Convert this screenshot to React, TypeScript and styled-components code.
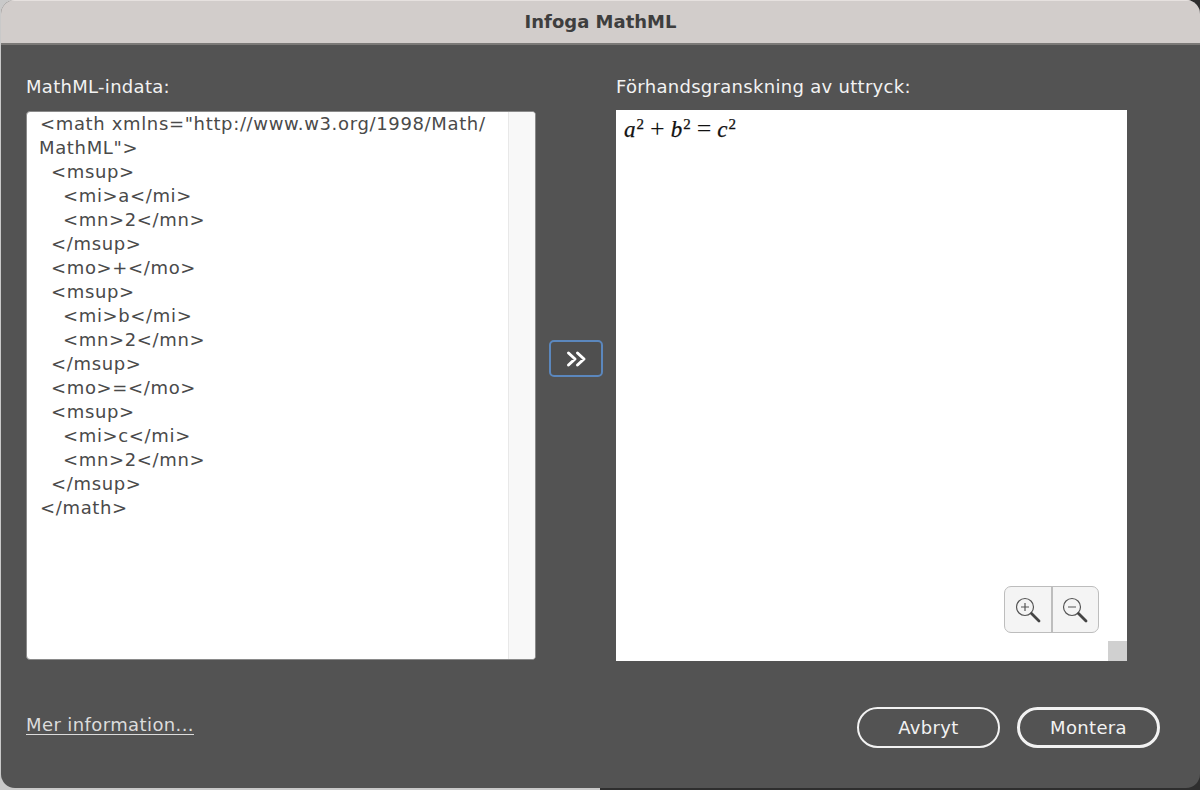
import React from 'react';
import styled, { createGlobalStyle } from 'styled-components';

const GlobalStyle = createGlobalStyle`
  html, body {
    margin: 0;
    padding: 0;
    width: 1200px;
    height: 790px;
    overflow: hidden;
    background: linear-gradient(90deg, #c9c9c9 0 50%, #2e2e2e 50% 100%);
  }
  * { box-sizing: border-box; }
`;

const FONT = `'DejaVu Sans', 'Liberation Sans', sans-serif`;

const Dialog = styled.div`
  width: 1199px;
  height: 788px;
  margin-left: 1px;
  display: flex;
  flex-direction: column;
  background: #535353;
  border-radius: 14px;
  overflow: hidden;
  font-family: ${FONT};
`;

const TitleBar = styled.header`
  height: 45px;
  flex: none;
  display: flex;
  align-items: center;
  justify-content: center;
  padding-bottom: 2px;
  background: #d2cdcb;
  border-top: 1px solid #e6e1df;
  border-bottom: 2px solid #7b7977;
  font-size: 18px;
  font-weight: 700;
  color: #3e3e3e;
`;

const Main = styled.main`
  flex: 1;
  display: grid;
  grid-template-columns: 510px 80px 511px;
  grid-template-rows: 22px 551px;
  row-gap: 12px;
  padding: 31px 0 0 25px;
`;

const Label = styled.label`
  font-size: 18px;
  line-height: 22px;
  letter-spacing: 0.3px;
  color: #f2f2f2;
  white-space: nowrap;
`;

const Spacer = styled.div``;

const Source = styled.div`
  height: 549px;
  margin-top: 1px;
  display: flex;
  background: #fff;
  border: 1px solid #8a8a8a;
  border-radius: 4px;
  overflow: hidden;
`;

const Code = styled.div`
  flex: 1;
  padding: 0 0 0 12px;
  font-size: 18px;
  line-height: 24px;
  letter-spacing: 0.65px;
  color: #4a4a4a;
`;

const CodeLine = styled.div<{ $indent: number; $nudge?: boolean }>`
  padding-left: ${(p) => p.$indent * 12 + (p.$nudge ? 1 : 0)}px;
  white-space: pre;
`;

const ScrollTrack = styled.div`
  width: 27px;
  background: #f8f8f8;
  border-left: 1px solid #e8e8e8;
`;

const Middle = styled.div`
  display: flex;
  justify-content: center;
  align-items: flex-start;
  padding-top: 230px;
`;

const ArrowButton = styled.button`
  width: 54px;
  height: 37px;
  padding: 0;
  display: flex;
  align-items: center;
  justify-content: center;
  background: #4f4f4f;
  border: 2px solid #5b87bd;
  border-radius: 5px;
`;

const Preview = styled.div`
  position: relative;
  background: #fff;
  padding: 7px 8px;
`;

const Formula = styled.div`
  display: flex;
  align-items: baseline;
  font-family: 'Liberation Serif', serif;
  font-size: 23px;
  line-height: 26px;
  color: #111;
  -webkit-text-stroke: 0.25px #111;
`;

const Variable = styled.i`
  font-weight: 500;
`;

const Exponent = styled.sup`
  display: inline-block;
  font-size: 15px;
  line-height: 0;
  margin-left: 1px;
  vertical-align: baseline;
  transform: translateY(-8px);
`;

const Operator = styled.span`
  margin: 0 6px;
  font-size: 26px;
  line-height: 0;
  -webkit-text-stroke: 0;
`;

const ZoomGroup = styled.div`
  position: absolute;
  left: 388px;
  top: 476px;
  width: 95px;
  height: 47px;
  display: flex;
  background: #f4f4f4;
  border: 1px solid #bdbdbd;
  border-radius: 7px;
  overflow: hidden;
`;

const ZoomButton = styled.button`
  flex: 1;
  padding: 0;
  display: flex;
  align-items: center;
  justify-content: center;
  background: transparent;
  border: none;
  & + & {
    border-left: 2px solid #bdbdbd;
  }
`;

const ScrollCorner = styled.div`
  position: absolute;
  right: 0;
  bottom: 0;
  width: 19px;
  height: 20px;
  background: #d0d0d0;
`;

const Footer = styled.footer`
  height: 128px;
  flex: none;
  display: flex;
  align-items: flex-start;
  padding: 46px 40px 0 25px;
  gap: 17px;
`;

const MoreLink = styled.a`
  margin-right: auto;
  margin-top: 5px;
  font-size: 18px;
  line-height: 26px;
  letter-spacing: 0.4px;
  color: #dcdcdc;
  text-decoration: underline;
  text-underline-offset: 3px;
`;

const PillButton = styled.button<{ $primary?: boolean }>`
  width: 143px;
  height: 41px;
  padding: 0;
  background: transparent;
  border: ${(p) => (p.$primary ? '3px' : '2px')} solid #f2f2f2;
  border-radius: 21px;
  font-family: ${FONT};
  font-size: 18px;
  letter-spacing: 0.35px;
  color: #f2f2f2;
`;

const lines: [number, string][] = [
  [0, '<math xmlns="http://www.w3.org/1998/Math/'],
  [0, 'MathML">'],
  [1, '<msup>'],
  [2, '<mi>a</mi>'],
  [2, '<mn>2</mn>'],
  [1, '</msup>'],
  [1, '<mo>+</mo>'],
  [1, '<msup>'],
  [2, '<mi>b</mi>'],
  [2, '<mn>2</mn>'],
  [1, '</msup>'],
  [1, '<mo>=</mo>'],
  [1, '<msup>'],
  [2, '<mi>c</mi>'],
  [2, '<mn>2</mn>'],
  [1, '</msup>'],
  [0, '</math>'],
];

const MagnifierIcon = ({ plus }: { plus?: boolean }) => (
  <svg width="30" height="30" viewBox="0 0 30 30" fill="none">
    <circle cx="12" cy="12" r="8.5" stroke="#555" strokeWidth="1.2" />
    <path d="M8 12h8" stroke="#555" strokeWidth="1.2" />
    {plus && <path d="M12 8v8" stroke="#555" strokeWidth="1.2" />}
    <path d="M18.5 18.5L26 26" stroke="#444" strokeWidth="2.8" strokeLinecap="round" />
  </svg>
);

const App = () => {
  return (
    <>
      <GlobalStyle />
      <Dialog>
        <TitleBar>Infoga MathML</TitleBar>
        <Main>
          <Label>MathML-indata:</Label>
          <Spacer />
          <Label>Förhandsgranskning av uttryck:</Label>
          <Source>
            <Code>
              {lines.map(([indent, text], i) => (
                <CodeLine key={i} $indent={indent} $nudge={i === 0 || i === lines.length - 1}>
                  {text}
                </CodeLine>
              ))}
            </Code>
            <ScrollTrack />
          </Source>
          <Middle>
            <ArrowButton aria-label="Konvertera">
              <svg width="24" height="18" viewBox="0 0 24 18" fill="none">
                <path
                  d="M4.5 3l6.5 6-6.5 6M13.5 3l6.5 6-6.5 6"
                  stroke="#fff"
                  strokeWidth="3"
                  strokeLinecap="round"
                  strokeLinejoin="round"
                />
              </svg>
            </ArrowButton>
          </Middle>
          <Preview>
            <Formula>
              <Variable>a</Variable>
              <Exponent>2</Exponent>
              <Operator>+</Operator>
              <Variable>b</Variable>
              <Exponent>2</Exponent>
              <Operator>=</Operator>
              <Variable>c</Variable>
              <Exponent>2</Exponent>
            </Formula>
            <ZoomGroup>
              <ZoomButton aria-label="Zooma in">
                <MagnifierIcon plus />
              </ZoomButton>
              <ZoomButton aria-label="Zooma ut">
                <MagnifierIcon />
              </ZoomButton>
            </ZoomGroup>
            <ScrollCorner />
          </Preview>
        </Main>
        <Footer>
          <MoreLink>Mer information...</MoreLink>
          <PillButton>Avbryt</PillButton>
          <PillButton $primary>Montera</PillButton>
        </Footer>
      </Dialog>
    </>
  );
};

export default App;
